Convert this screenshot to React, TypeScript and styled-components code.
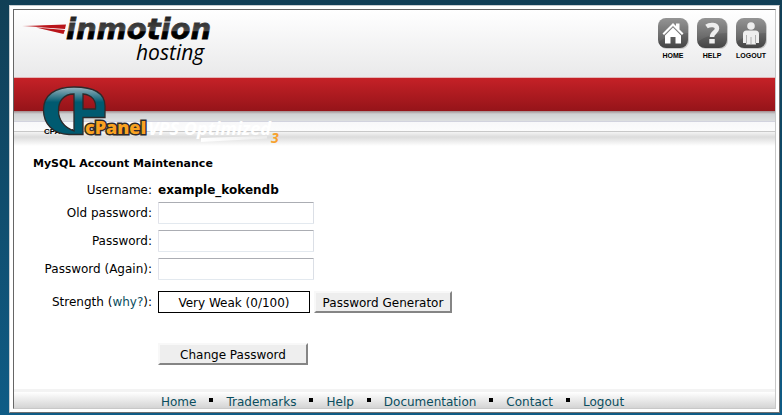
import React from "react";
import styled, { createGlobalStyle } from "styled-components";

const Global = createGlobalStyle`
  * { box-sizing: border-box; }
  html { min-height: 100%; background: linear-gradient(#113f56, #0f5c86); }
  body { margin: 0; font: 12px/16px Verdana, "DejaVu Sans", sans-serif; color: #000; }
`;

const Frame = styled.div`
  margin: 5px 2px 3px 9px;
  padding: 3px;
  background: #fff;
  border: 1px solid;
  border-color: #c9ced2 #707070 #707070 #c9ced2;
`;

const Panel = styled.main`
  display: flex;
  flex-direction: column;
  border: 1px solid;
  border-color: #666 #c8c8c8 #c8c8c8 #666;
`;

const Header = styled.header`
  display: flex;
  justify-content: space-between;
  height: 68px;
  background: linear-gradient(#fff, #e9e9ea);
  border-bottom: 1px solid #e3b5b7;
`;

const Brand = styled.a`
  display: block;
  height: 66px;
`;

const IconNav = styled.nav`
  display: flex;
  gap: 5px;
  padding: 8px 7px 0 0;
`;

const IconLink = styled.a`
  display: flex;
  flex-direction: column;
  align-items: center;
  width: 34px;
  gap: 2px;
  color: #000;
  font: bold 7px/8px "Liberation Sans", sans-serif;
  text-decoration: none;
`;

const Banner = styled.section`
  position: relative;
`;

const RedBar = styled.div`
  height: 33px;
  background: linear-gradient(#c52127, #951419);
`;

const ShadeBar = styled.div`
  height: 11px;
  background: linear-gradient(#a08c8e, #cfd1d3 3px, #dddfe0);
  border-bottom: 1px solid #d2d3de;
`;

const CrumbBar = styled.div`
  height: 27px;
  background: linear-gradient(#f8f8fa, #fcfcfc 9px, #c8c8c8 9px, #c8c8c8 10px, #f4f4f4 10px, #dcdcdc 15px, #fff 24px);
`;

const BannerArt = styled.svg`
  position: absolute;
  left: 16px;
  top: 0;
`;

const Content = styled.form`
  padding: 7px 19px 2px;
`;

const Title = styled.h1`
  margin: 0 0 9px;
  font-size: 11px;
  line-height: 16px;
`;

const Fields = styled.div`
  display: grid;
  grid-template-columns: 119px auto;
  column-gap: 6px;
  align-items: center;
  justify-content: start;
`;

const Row = styled.div<{ $height: number }>`
  display: grid;
  grid-column: 1 / -1;
  grid-template-columns: subgrid;
  align-items: center;
  min-height: ${(p) => p.$height}px;
`;

const Label = styled.label`
  text-align: right;
  white-space: nowrap;
`;

const TextBox = styled.input`
  width: 156px;
  height: 22px;
  padding: 2px 4px;
  font: inherit;
  background: #fff;
  border: 1px solid;
  border-color: #abadb3 #dbdfe6 #e3e9ef #e2e3ea;
  border-radius: 1px;
`;

const Line = styled.div`
  display: flex;
  align-items: center;
  gap: 4px;
`;

const Meter = styled.output`
  width: 152px;
  height: 22px;
  line-height: 22px;
  text-align: center;
  border: 1px solid #000;
`;

const Button = styled.button<{ $width: number }>`
  width: ${(p) => p.$width}px;
  height: 22px;
  padding: 2px 0 0;
  font: inherit;
  line-height: 16px;
  color: #000;
  white-space: nowrap;
  background: #eee;
  border: 2px solid;
  border-color: #f8f8f8 #858585 #858585 #f8f8f8;
`;

const TextLink = styled.a`
  color: #0a4d5e;
  text-decoration: none;
`;

const Footer = styled.footer`
  display: flex;
  align-items: center;
  gap: 13px;
  height: 19px;
  padding: 7px 0 0 147px;
  background: linear-gradient(#f3f3f3 3px, #fff 3px, #d4d4d4);
`;

const Dot = styled.span`
  width: 4px;
  height: 4px;
  margin-bottom: 4px;
  background: #000;
`;

const BrandLogo = () => (
  <svg width="210" height="66" viewBox="14 10 210 66" role="img" aria-label="inmotion hosting">
    <defs>
      <linearGradient id="ink" x1="0" y1="17" x2="0" y2="40" gradientUnits="userSpaceOnUse">
        <stop offset="0" stopColor="#222" />
        <stop offset=".6" stopColor="#484848" />
        <stop offset=".64" stopColor="#000" />
      </linearGradient>
      <linearGradient id="flare" x1="22" y1="0" x2="65" y2="0" gradientUnits="userSpaceOnUse">
        <stop offset="0" stopColor="#d98d90" />
        <stop offset=".5" stopColor="#b9141a" />
      </linearGradient>
    </defs>
    <path d="M22 26 66 24.500 65 29Z M36 27.500 65 30 63.500 34Z" fill="url(#flare)" />
    <text x="66" y="39" fill="url(#ink)" stroke="url(#ink)" strokeWidth=".8" fontFamily="DejaVu Sans" fontWeight="bold" fontStyle="italic" fontSize="29">inmotion</text>
    <text x="136" y="60" fontFamily="Open Sans" fontStyle="italic" fontSize="21">hosting</text>
  </svg>
);

const glyphs = {
  Home: (
    <g fill="#fff">
      <path d="M4.500 15.500 15 5l3 3V5.500h3.500V11.500l4 4-1.500 1.500L15 8 6 17Z" />
      <path d="M15 9.500 23 17.500V25.500h-5.500V19h-5v6.500H7V17.500Z" />
    </g>
  ),
  Help: (
    <g fill="none" stroke="#eee" strokeWidth="4.500">
      <path d="M9.500 8.500c3-2 10.500-2.500 10.500 2 0 4-5 3.500-5 8.500" />
      <path d="M15 21v4.500" strokeWidth="5.500" />
    </g>
  ),
  Logout: (
    <g fill="#eee">
      <circle cx="15" cy="8" r="3.800" />
      <path d="M10.500 12.500h9q3.500 0 3.500 3.500V25H7v-9q0-3.500 3.500-3.500Z" />
      <path d="M10 25h10v1.500H10Z" />
      <path d="M10.500 17v8.500M19.500 17v8.500M15 19v7.500" stroke="#a0a0a0" strokeWidth=".8" />
    </g>
  ),
};

const NavIcon = ({ name }: { name: keyof typeof glyphs }) => (
  <svg width="32" height="32" viewBox="-1 0 32 32" aria-hidden="true">
    <defs>
      <linearGradient id={"tile" + name} x1="0" y1="0" x2="0" y2="1">
        <stop offset="0" stopColor="#8c8c8c" />
        <stop offset="1" stopColor="#444" />
      </linearGradient>
    </defs>
    <rect x="1" y="1" width="30" height="30" rx="8" fill="#c9c9c9" />
    <rect width="30" height="30" rx="8" fill={"url(#tile" + name + ")"} />
    <path d="M8 0h14q8 0 8 8v7Q13 15 0 24V8q0-8 8-8Z" fill="#fff" opacity=".08" />
    {glyphs[name]}
  </svg>
);

const PanelLogo = () => (
  <BannerArt width="256" height="70" viewBox="30 78 256 70" role="img" aria-label="cPanel VPS Optimized 3">
    <defs>
      <linearGradient id="teal" x1="0" y1="86" x2="0" y2="104" gradientUnits="userSpaceOnUse">
        <stop offset="0" stopColor="#a5bbc4" />
        <stop offset=".9" stopColor="#005a70" />
      </linearGradient>
      <linearGradient id="sweep">
        <stop stopColor="#fff" />
        <stop offset="1" stopColor="#fff" stopOpacity=".4" />
      </linearGradient>
    </defs>
    <text x="44" y="134" fontFamily="Liberation Sans" fontWeight="bold" fontSize="8">CPANEL</text>
    <path
      fillRule="evenodd"
      fill="url(#teal)"
      stroke="#2d2a2b"
      strokeWidth="1.300"
      d="M83 134.500H69C53 134 43.500 124 43.500 110 43.500 95 55 87 74 87c19 0 31 6 31 19v11.500H83ZM74 94C63 94 58.500 102 58.500 110c0 9 5 17 15.500 21ZM83 94v15h12.500c1-8-3-14-12.500-15Z"
    />
    <text x="85" y="134" fill="#f9a220" stroke="#2d2a2b" strokeWidth="3" paintOrder="stroke" fontFamily="Open Sans" fontWeight="800" fontSize="18">cPanel</text>
    <text x="148" y="135" fill="#fff" fontFamily="Open Sans" fontWeight="bold" fontStyle="italic" fontSize="18">VPS Optimized</text>
    <path d="M201 138 267 136v2.500L201 142Z" fill="url(#sweep)" />
    <text x="271" y="143" fill="#f7a12d" fontFamily="Open Sans" fontWeight="bold" fontStyle="italic" fontSize="14">3</text>
  </BannerArt>
);

const links = ["Home", "Trademarks", "Help", "Documentation", "Contact", "Logout"];
const passwords = [
  ["old", "Old password:"],
  ["new", "Password:"],
  ["again", "Password (Again):"],
];

export default function App() {
  return (
    <>
      <Global />
      <Frame>
        <Panel>
          <Header>
            <Brand href="#"><BrandLogo /></Brand>
            <IconNav>
              {(["Home", "Help", "Logout"] as const).map((name) => (
                <IconLink href="#" key={name}><NavIcon name={name} />{name.toUpperCase()}</IconLink>
              ))}
            </IconNav>
          </Header>
          <Banner>
            <RedBar />
            <ShadeBar />
            <CrumbBar />
            <PanelLogo />
          </Banner>
          <Content onSubmit={(e) => e.preventDefault()}>
            <Title>MySQL Account Maintenance</Title>
            <Fields>
              <Row $height={18}><Label as="span">Username:</Label><b>example_kokendb</b></Row>
              {passwords.map(([id, text]) => (
                <Row $height={28} key={id}>
                  <Label htmlFor={id}>{text}</Label>
                  <TextBox id={id} type="password" />
                </Row>
              ))}
              <Row $height={38}>
                <Label as="span">Strength (<TextLink href="#">why?</TextLink>):</Label>
                <Line>
                  <Meter>Very Weak (0/100)</Meter>
                  <Button type="button" $width={138}>Password Generator</Button>
                </Line>
              </Row>
              <Row $height={66}>
                <span />
                <Button type="submit" $width={150}>Change Password</Button>
              </Row>
            </Fields>
          </Content>
          <Footer>
            {links.map((name, i) => (
              <React.Fragment key={name}>
                {i > 0 && <Dot />}
                <TextLink href="#">{name}</TextLink>
              </React.Fragment>
            ))}
          </Footer>
        </Panel>
      </Frame>
    </>
  );
}
